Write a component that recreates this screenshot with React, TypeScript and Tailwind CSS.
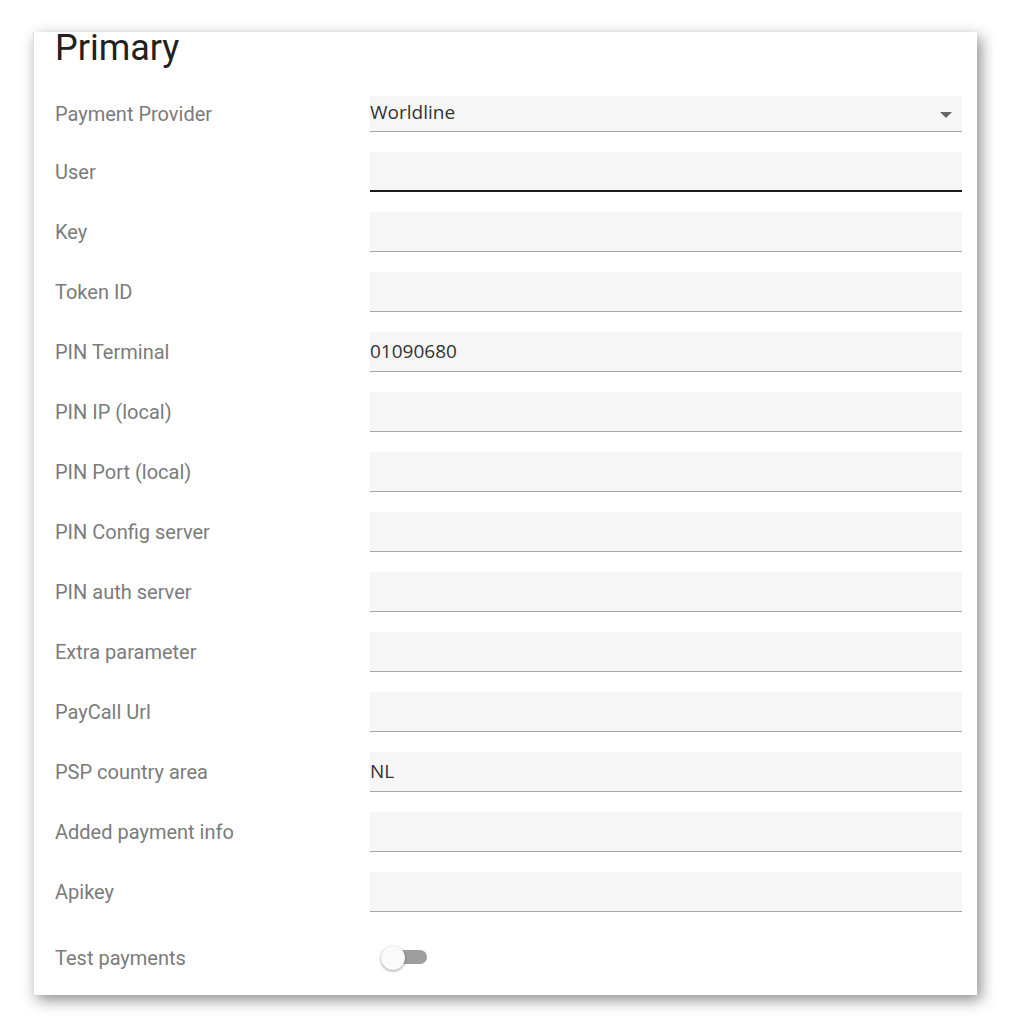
import React from "react";

type Field = {
  label: string;
  value?: string;
  focused?: boolean;
};

const fields: Field[] = [
  { label: "User", focused: true },
  { label: "Key" },
  { label: "Token ID" },
  { label: "PIN Terminal", value: "01090680" },
  { label: "PIN IP (local)" },
  { label: "PIN Port (local)" },
  { label: "PIN Config server" },
  { label: "PIN auth server" },
  { label: "Extra parameter" },
  { label: "PayCall Url" },
  { label: "PSP country area", value: "NL" },
  { label: "Added payment info" },
  { label: "Apikey" },
];

const labelCls =
  "w-[315px] shrink-0 text-[20px] text-[#7b7b7b] font-['Roboto',sans-serif]";

export default function App() {
  return (
    <div className="min-h-[1027px] w-[1009px] bg-white pt-[32px] pl-[33px]">
      <div className="w-[944px] h-[963px] bg-white border-l border-[#dcdcdc] shadow-[4px_5px_14px_rgba(0,0,0,0.45)] pl-[21px] pr-[15px]">
        <h1 className="text-[36px] leading-[32px] text-[#212121] font-['Roboto',sans-serif]">
          Primary
        </h1>

        <div className="mt-[32px] flex flex-col gap-[20px]">
          <div className="flex items-center">
            <div className={labelCls}>Payment Provider</div>
            <div className="flex-1 h-[36px] bg-[#f6f6f6] border-b border-[#a6a6a6] flex items-center justify-between pr-[10px]">
              <span className="text-[19px] text-[#333] font-['Open_Sans',sans-serif] -mt-[3px]">
                Worldline
              </span>
              <svg width="12" height="6" viewBox="0 0 12 6" className="mt-[2px]">
                <path d="M0 0 L12 0 L6 6 Z" fill="#666" />
              </svg>
            </div>
          </div>

          {fields.map((f) => (
            <div key={f.label} className="flex items-center">
              <div className={labelCls}>{f.label}</div>
              <div
                className={
                  f.focused
                    ? "flex-1 h-[40px] bg-[#f6f6f6] border-b-2 border-[#1a1a1a] flex items-center"
                    : "flex-1 h-[40px] bg-[#f6f6f6] border-b border-[#a6a6a6] flex items-center"
                }
              >
                <span className="text-[19px] text-[#333] font-['Open_Sans',sans-serif]">
                  {f.value ?? ""}
                </span>
              </div>
            </div>
          ))}

          <div className="flex items-center h-[52px]">
            <div className={labelCls}>Test payments</div>
            <div className="relative w-[48px] h-[24px] ml-[11px]">
              <div className="absolute left-[12px] top-[4px] w-[34px] h-[14px] rounded-full bg-[#9e9e9e]" />
              <div className="absolute left-0 top-0 w-[24px] h-[24px] rounded-full bg-[#fafafa] shadow-[0_1px_3px_rgba(0,0,0,0.4)]" />
            </div>
          </div>
        </div>
      </div>
    </div>
  );
}
